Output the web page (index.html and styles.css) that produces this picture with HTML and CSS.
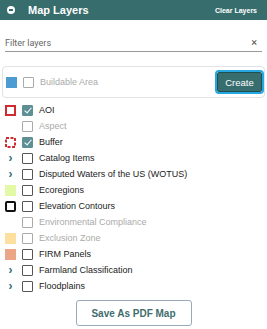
FILE: index.html
```html
<!DOCTYPE html>
<html lang="en">
<head>
    <meta charset="UTF-8">
    <meta name="viewport" content="width=device-width, initial-scale=1.0">
    <title>Map Layers</title>
    <link rel="stylesheet" href="styles.css">
</head>
<body>
    <div class="header">
        <span class="collapse-icon"></span>
        <span class="title">Map Layers</span>
        <span class="clear">Clear Layers</span>
    </div>

    <div class="filter">
        <span class="filter-text">Filter layers</span>
        <span class="filter-x">&times;</span>
    </div>

    <div class="draw-box">
        <span class="swatch sw-blue"></span>
        <span class="check light"></span>
        <span class="label disabled">Buildable Area</span>
        <button class="create-btn">Create</button>
    </div>

    <div class="layers">
        <div class="row"><span class="swatch sw-red"></span><span class="check checked"></span><span class="label">AOI</span></div>
        <div class="row"><span class="swatch"></span><span class="check light"></span><span class="label disabled">Aspect</span></div>
        <div class="row">
            <svg class="swatch" viewBox="0 0 11 11"><rect x="1" y="1" width="9" height="9" fill="none" stroke="#d12a30" stroke-width="2" stroke-dasharray="3 1.5"/></svg>
            <span class="check checked"></span><span class="label">Buffer</span>
        </div>
        <div class="row"><span class="swatch chev">&#8250;</span><span class="check"></span><span class="label">Catalog Items</span></div>
        <div class="row"><span class="swatch chev">&#8250;</span><span class="check"></span><span class="label">Disputed Waters of the US (WOTUS)</span></div>
        <div class="row"><span class="swatch sw-lime"></span><span class="check"></span><span class="label">Ecoregions</span></div>
        <div class="row"><span class="swatch sw-black"></span><span class="check"></span><span class="label">Elevation Contours</span></div>
        <div class="row"><span class="swatch"></span><span class="check light"></span><span class="label disabled">Environmental Compliance</span></div>
        <div class="row"><span class="swatch sw-peach"></span><span class="check light"></span><span class="label disabled">Exclusion Zone</span></div>
        <div class="row"><span class="swatch sw-salmon"></span><span class="check"></span><span class="label">FIRM Panels</span></div>
        <div class="row"><span class="swatch chev">&#8250;</span><span class="check"></span><span class="label">Farmland Classification</span></div>
        <div class="row"><span class="swatch chev">&#8250;</span><span class="check"></span><span class="label">Floodplains</span></div>
    </div>

    <div class="footer">
        <button class="pdf-btn">Save As PDF Map</button>
    </div>
</body>
</html>
```

FILE: styles.css
```css
body {
    margin: 0;
    font-family: "Liberation Sans", Arial, sans-serif;
    color: #222;
    background: #fff;
    width: 267px;
    height: 329px;
    overflow: hidden;
}
.header {
    height: 20px;
    background-color: #376d6d;
    color: white;
    display: flex;
    align-items: center;
    padding: 0 10px 0 7px;
}
.collapse-icon {
    width: 8px;
    height: 8px;
    border-radius: 50%;
    background: white;
    position: relative;
    margin-right: 13px;
}
.collapse-icon::after {
    content: "";
    position: absolute;
    left: 2px;
    top: 3px;
    width: 4px;
    height: 2px;
    background: #376d6d;
}
.title {
    font-weight: bold;
    font-size: 11px;
    flex: 1;
}
.clear {
    font-weight: bold;
    font-size: 7px;
}
.filter {
    margin: 14px 5px 0 5px;
    height: 17px;
    border-bottom: 1px solid #999;
    display: flex;
    align-items: center;
    font-family: Roboto, sans-serif;
    font-size: 9px;
}
.filter-text {
    flex: 1;
    color: #666;
}
.filter-x {
    color: #555;
    font-size: 11px;
    margin-right: 5px;
}
.draw-box {
    margin: 14px 2px 0 2px;
    height: 30px;
    border: 1px solid #e2e2e2;
    border-radius: 4px;
    display: flex;
    align-items: center;
    padding: 0 2px 0 3px;
}
.swatch {
    width: 11px;
    height: 11px;
    box-sizing: border-box;
    margin-right: 6px;
    flex: none;
}
.sw-blue { background: #4c9bd3; }
.sw-red { border: 2px solid #d12a30; }
.sw-lime { background: #e3f9a6; }
.sw-black { border: 2px solid #111; border-radius: 2px; }
.sw-peach { background: #fde0a0; }
.sw-salmon { background: #eba587; }
.chev {
    color: #2e6d7a;
    font-size: 12px;
    font-weight: bold;
    line-height: 11px;
    text-align: center;
}
.check {
    width: 11px;
    height: 11px;
    box-sizing: border-box;
    border: 1px solid #555;
    border-radius: 1px;
    margin-right: 6px;
    flex: none;
    position: relative;
}
.check.light { border-color: #aaa; }
.check.checked {
    background: #5d8f94;
    border-color: #5d8f94;
}
.check.checked::after {
    content: "";
    position: absolute;
    left: 3px;
    top: 0px;
    width: 3px;
    height: 6px;
    border: solid white;
    border-width: 0 1px 1px 0;
    transform: rotate(40deg);
}
.label {
    font-size: 9px;
    white-space: nowrap;
}
.label.disabled { color: #aaa; }
.draw-box .label { flex: 1; }
.create-btn {
    width: 45px;
    height: 20px;
    background: #376d6d;
    color: white;
    border: 1px solid #1f4f4f;
    outline: 2px solid #27a7e0;
    outline-offset: 0;
    border-radius: 2px;
    font-family: "Liberation Sans", Arial, sans-serif;
    font-size: 9.5px;
    padding: 0;
}
.layers {
    margin-top: 4px;
    padding-left: 5px;
}
.row {
    height: 16px;
    display: flex;
    align-items: center;
}
.footer {
    display: flex;
    justify-content: center;
    margin-top: 6px;
}
.pdf-btn {
    width: 116px;
    height: 26px;
    background: white;
    border: 1px solid #9ab;
    border-radius: 3px;
    color: #3f6d6d;
    font-family: "Liberation Sans", Arial, sans-serif;
    font-weight: bold;
    font-size: 10px;
}
```
